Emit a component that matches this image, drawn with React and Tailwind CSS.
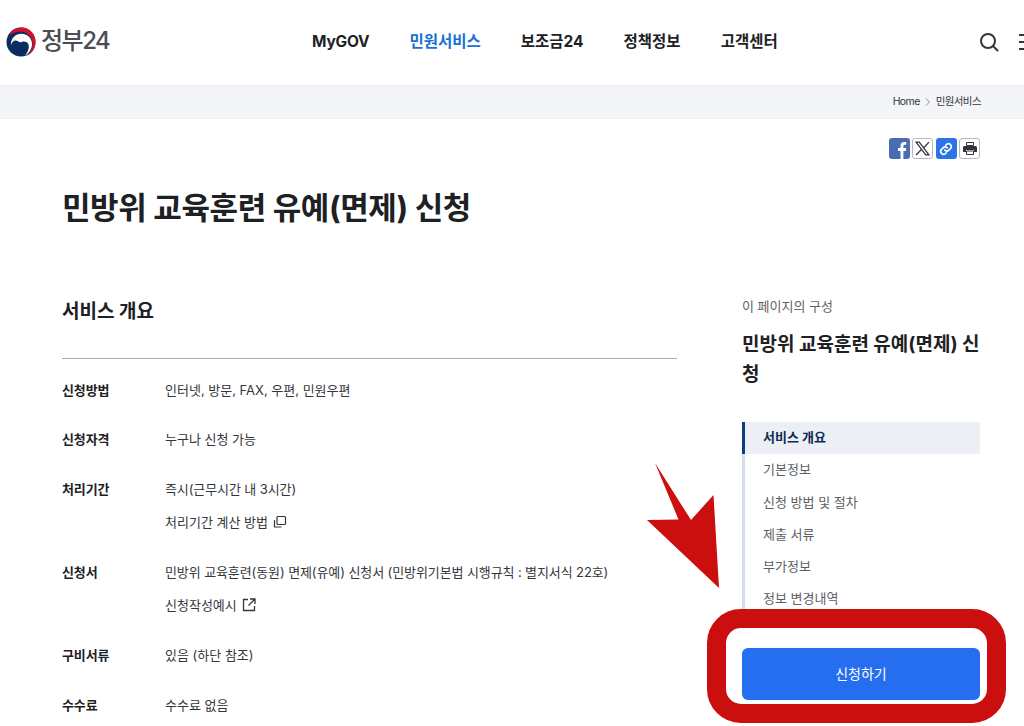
import React from "react";

const font = { fontFamily: '"Inter","Noto Sans CJK KR",sans-serif' };

function Logo() {
  return (
    <svg width="30" height="30" viewBox="0 0 30 30" className="shrink-0 mt-[1px]">
      <circle cx="15" cy="15" r="14.500" fill="#0b2c5e" />
      <path d="M5 4.500C8.500 1.500 13 0 17.500.5 24.500 1.500 30 8 29.500 16 29 22 25.500 27 20.500 29 24.500 26 27 21 26.500 16 26 9 20.500 4.500 14.500 4.500 10.500 4.500 7 5.500 3.500 8.500Z" fill="#d3112f" />
      <path d="M5 18C4.500 11.500 9.500 6.800 15.500 6.800 22 6.800 26.500 12 26 18 25.500 23 22.500 27 19 28.500 22 25 23.500 21 22.500 17.500 21.500 14.500 18 14 15.500 15 13 16 12 13.500 9.500 13.500 7.500 13.500 5.800 15.500 5 18Z" fill="#fff" />
    </svg>
  );
}

function Row({ label, first, children }) {
  return (
    <div className={first ? "flex mb-[27px]" : "flex mb-[28px]"}>
      <div className="w-[103px] shrink-0 text-[13px] font-bold text-[#1e2124] leading-[22px] tracking-[-0.1px]">{label}</div>
      <div className="flex flex-col gap-[11px] text-[13px] text-[#33363d] leading-[22px]">{children}</div>
    </div>
  );
}

export default function App() {
  return (
    <div className="relative w-[1024px] h-[726px] overflow-hidden bg-white" style={font}>
      <header className="h-[85px] flex items-center relative">
        <div className="flex items-center gap-[5px] pl-[6px] w-[290px] -mt-[3px]">
          <Logo />
          <span className="text-[24px] font-medium text-[#4a4d52] tracking-[-1.500px] leading-none">정부24</span>
        </div>
        <nav className="flex items-center gap-[40px] ml-[22px] -mt-[2px] text-[15.500px] font-bold text-[#1e2124]">
          <span className="tracking-[-0.2px]">MyGOV</span>
          <span className="text-[#1a6fd8]">민원서비스</span>
          <span>보조금24</span>
          <span>정책정보</span>
          <span>고객센터</span>
        </nav>
        <svg className="absolute left-[979px] top-[32px]" width="20" height="20" viewBox="0 0 20 20" fill="none" stroke="#33363d" strokeWidth="2">
          <circle cx="9" cy="9" r="7" />
          <path d="M14 14l4.500 4.500" strokeLinecap="round" />
        </svg>
        <div className="absolute left-[1019px] top-[34px] w-[8px] flex flex-col gap-[5px]">
          <div className="h-[2px] bg-[#33363d]" />
          <div className="h-[2px] bg-[#33363d]" />
          <div className="h-[2px] bg-[#33363d]" />
        </div>
      </header>

      <div className="h-[34px] bg-[#f4f5f9] border-y border-[#eceef2] flex items-center justify-end pr-[43px] text-[10.500px] text-[#33363d]">
        <span className="tracking-[-0.6px]">Home</span>
        <svg className="mx-[5px]" width="6" height="8" viewBox="0 0 6 8" fill="none" stroke="#8a8d93" strokeWidth="1">
          <path d="M1 .5 4.500 4 1 7.500" />
        </svg>
        <span className="tracking-[-0.6px]">민원서비스</span>
      </div>

      <div className="flex justify-end gap-[2.300px] pr-[44px] pt-[19px]">
        <div className="w-[21px] h-[21px] rounded-[3px] bg-[#4a6cb3] overflow-hidden">
          <svg width="21" height="21" viewBox="0 0 21 21"><path d="M11.500 21v-8H9V10h2.500V7.800C11.500 5.400 13 4 15.200 4c1 0 1.800.1 2 .1v2.600h-1.400c-1.200 0-1.400.6-1.400 1.400V10h2.800l-.4 3h-2.400v8Z" fill="#fff" /></svg>
        </div>
        <div className="w-[21px] h-[21px] rounded-[3px] border border-[#b5b8bd] flex items-center justify-center bg-white">
          <svg width="15" height="15" viewBox="0 0 14 14" fill="none" stroke="#33363d"><path d="M1 1h3l9 12h-3Z" strokeWidth="1.200" /><path d="M13 1 8 6.500M6 8l-5 5" strokeWidth="1.200" /></svg>
        </div>
        <div className="w-[21px] h-[21px] rounded-[3px] bg-[#2a73e8] flex items-center justify-center">
          <svg width="14" height="14" viewBox="0 0 24 24" fill="none" stroke="#fff" strokeWidth="2.800" strokeLinecap="round"><path d="M10 14a5 5 0 0 0 7 0l3-3a5 5 0 0 0-7-7l-1.500 1.500" /><path d="M14 10a5 5 0 0 0-7 0l-3 3a5 5 0 0 0 7 7l1.500-1.500" /></svg>
        </div>
        <div className="w-[21px] h-[21px] rounded-[3px] border border-[#b5b8bd] flex items-center justify-center bg-white">
          <svg width="14" height="13" viewBox="0 0 14 13"><path d="M3.500.5h7v3h-7Z" fill="none" stroke="#33363d" /><path d="M1.500 4h11c.8 0 1.500.7 1.500 1.500V10h-3V8H3v2H0V5.500C0 4.700.7 4 1.500 4Z" fill="#33363d" /><path d="M3.500 9h7v3.500h-7Z" fill="none" stroke="#33363d" /></svg>
        </div>
      </div>

      <h1 className="ml-[62px] mt-[25px] text-[31px] font-bold text-[#1e2124] leading-[48px] tracking-[-0.4px]">민방위 교육훈련 유예(면제) 신청</h1>

      <div className="flex pl-[62px] pr-[44px] mt-[65px]">
        <main className="w-[615px] shrink-0">
          <h2 className="text-[19px] font-bold text-[#1e2124] leading-[28px] mt-[1px]">서비스 개요</h2>
          <div className="h-px bg-[#a9acb0] mt-[32px] mb-[20px]" />
          <Row first label="신청방법"><span>인터넷, 방문, FAX, 우편, 민원우편</span></Row>
          <Row label="신청자격"><span>누구나 신청 가능</span></Row>
          <Row label="처리기간">
            <span className="tracking-[-0.1px]">즉시(근무시간 내 3시간)</span>
            <span className="flex items-center gap-[5px]">
              처리기간 계산 방법
              <svg width="14" height="14" viewBox="0 0 14 14" fill="none" stroke="#33363d" strokeWidth="1.200"><rect x="4" y="1.500" width="8.500" height="8" rx="1" /><path d="M1.500 5v7h7" /></svg>
            </span>
          </Row>
          <Row label="신청서">
            <span className="tracking-[-0.1px]">민방위 교육훈련(동원) 면제(유예) 신청서 (민방위기본법 시행규칙 : 별지서식 22호)</span>
            <span className="flex items-center gap-[5px]">
              신청작성예시
              <svg width="14" height="14" viewBox="0 0 14 14" fill="none" stroke="#33363d" strokeWidth="1.300"><path d="M6 1.500H1.500v11h11V8" /><path d="M8 1h5v5M13 1 6.500 7.500" /></svg>
            </span>
          </Row>
          <Row label="구비서류"><span>있음 (하단 참조)</span></Row>
          <Row label="수수료"><span>수수료 없음</span></Row>
        </main>

        <aside className="ml-[65px] w-[238px] shrink-0">
          <p className="text-[13px] text-[#5f6368] leading-[20px] -mt-[1px]">이 페이지의 구성</p>
          <h3 className="text-[19px] font-bold text-[#1e2124] leading-[30px] mt-[14px]">민방위 교육훈련 유예(면제) 신청</h3>
          <ul className="mt-[32px] border-l-[3px] border-[#d5deea] text-[13px] text-[#5a5e64]">
            <li className="relative -ml-[3px] h-[32px] pl-[18px] flex items-center bg-[#eceff4] border-l-[3px] border-[#0b3f82] font-bold text-[#0f2c55]">서비스 개요</li>
            <li className="h-[32.200px] pl-[18px] flex items-center">기본정보</li>
            <li className="h-[32.200px] pl-[18px] flex items-center">신청 방법 및 절차</li>
            <li className="h-[32.200px] pl-[18px] flex items-center">제출 서류</li>
            <li className="h-[32.200px] pl-[18px] flex items-center">부가정보</li>
            <li className="h-[32.200px] pl-[18px] flex items-center">정보 변경내역</li>
          </ul>
          <button className="mt-[33px] w-[238px] h-[52px] rounded-[6px] bg-[#256ef0] text-white text-[14px]">신청하기</button>
        </aside>
      </div>

      <div className="absolute left-[707px] top-[609px] w-[299px] h-[114px] rounded-[34px] border-[19px] border-[#cb0e0e]" />
      <svg className="absolute left-[640px] top-[455px]" width="90" height="140" viewBox="0 0 90 140">
        <path d="M15 8 L51 65 L73.500 40 L79 133 L7 65 L38.500 64.500 Z" fill="#cb0e0e" />
      </svg>
    </div>
  );
}
